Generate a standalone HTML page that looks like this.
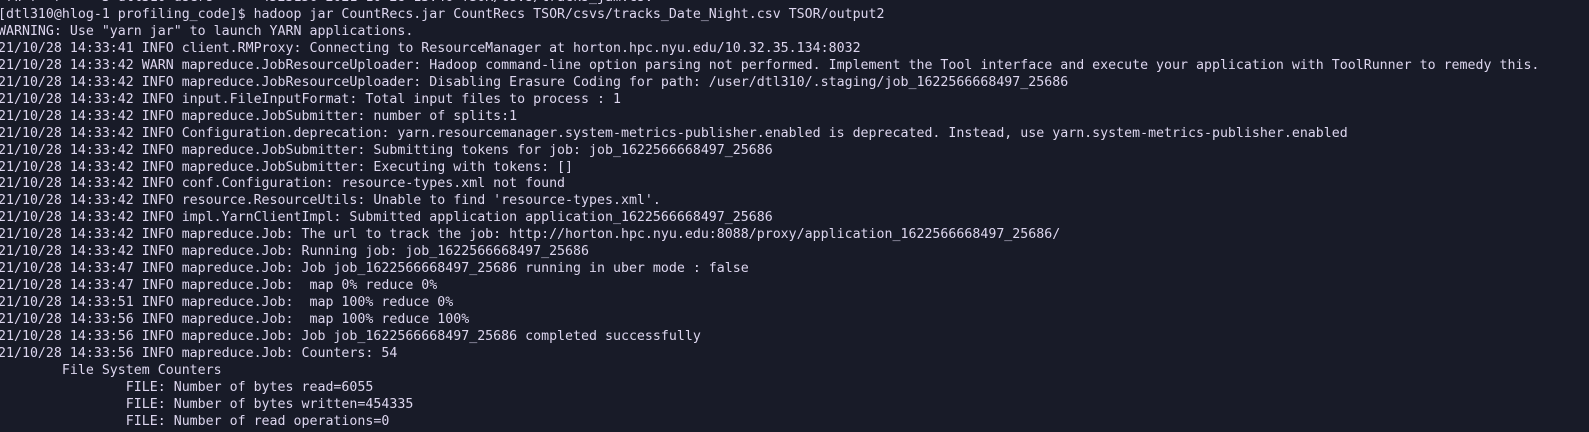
<!DOCTYPE html>
<html><head><meta charset="utf-8"><style>
html,body{margin:0;padding:0;width:1589px;height:432px;overflow:hidden;background:#181b28;}
pre{position:absolute;left:-2px;top:-10px;margin:0;font-family:"DejaVu Sans Mono","Liberation Mono",monospace;font-size:13.27px;line-height:16.95px;color:#ddd6ef;white-space:pre;}
</style></head><body><pre>-rw-r--r--   3 dtl310 users      4523156 2021-10-28 13:46 TSOR/csvs/tracks_jam.csv
[dtl310@hlog-1 profiling_code]$ hadoop jar CountRecs.jar CountRecs TSOR/csvs/tracks_Date_Night.csv TSOR/output2
WARNING: Use "yarn jar" to launch YARN applications.
21/10/28 14:33:41 INFO client.RMProxy: Connecting to ResourceManager at horton.hpc.nyu.edu/10.32.35.134:8032
21/10/28 14:33:42 WARN mapreduce.JobResourceUploader: Hadoop command-line option parsing not performed. Implement the Tool interface and execute your application with ToolRunner to remedy this.
21/10/28 14:33:42 INFO mapreduce.JobResourceUploader: Disabling Erasure Coding for path: /user/dtl310/.staging/job_1622566668497_25686
21/10/28 14:33:42 INFO input.FileInputFormat: Total input files to process : 1
21/10/28 14:33:42 INFO mapreduce.JobSubmitter: number of splits:1
21/10/28 14:33:42 INFO Configuration.deprecation: yarn.resourcemanager.system-metrics-publisher.enabled is deprecated. Instead, use yarn.system-metrics-publisher.enabled
21/10/28 14:33:42 INFO mapreduce.JobSubmitter: Submitting tokens for job: job_1622566668497_25686
21/10/28 14:33:42 INFO mapreduce.JobSubmitter: Executing with tokens: []
21/10/28 14:33:42 INFO conf.Configuration: resource-types.xml not found
21/10/28 14:33:42 INFO resource.ResourceUtils: Unable to find 'resource-types.xml'.
21/10/28 14:33:42 INFO impl.YarnClientImpl: Submitted application application_1622566668497_25686
21/10/28 14:33:42 INFO mapreduce.Job: The url to track the job: http://horton.hpc.nyu.edu:8088/proxy/application_1622566668497_25686/
21/10/28 14:33:42 INFO mapreduce.Job: Running job: job_1622566668497_25686
21/10/28 14:33:47 INFO mapreduce.Job: Job job_1622566668497_25686 running in uber mode : false
21/10/28 14:33:47 INFO mapreduce.Job:  map 0% reduce 0%
21/10/28 14:33:51 INFO mapreduce.Job:  map 100% reduce 0%
21/10/28 14:33:56 INFO mapreduce.Job:  map 100% reduce 100%
21/10/28 14:33:56 INFO mapreduce.Job: Job job_1622566668497_25686 completed successfully
21/10/28 14:33:56 INFO mapreduce.Job: Counters: 54
        File System Counters
                FILE: Number of bytes read=6055
                FILE: Number of bytes written=454335
                FILE: Number of read operations=0
</pre></body></html>
